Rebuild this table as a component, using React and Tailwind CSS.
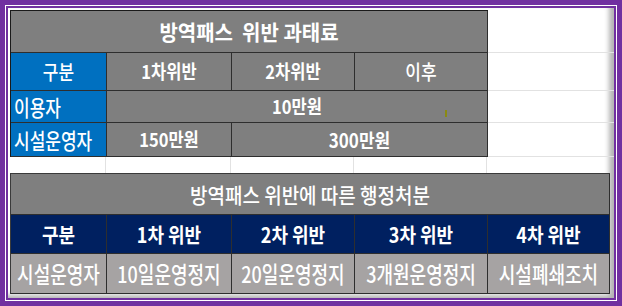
import React from "react";

const font = "font-['Noto_Sans_CJK_KR','Noto_Sans',sans-serif]";

function Cell({ className = "", children, left }) {
  return (
    <div
      className={`flex items-center border-r border-b border-[#2e2e2e] text-white ${
        left ? "justify-start pl-[3px]" : "justify-center"
      } ${className}`}
    >
      {children}
    </div>
  );
}

export default function App() {
  return (
    <div className={`w-[622px] h-[306px] bg-[#7030a0] p-[5px] ${font}`}>
      <div className="h-full border border-white bg-[#7030a0] p-[2px]">
        <div className="h-full bg-white pl-[2px] pt-[2px] shadow-[inset_-5px_-3px_5px_rgba(0,0,0,0.3)]">
          {/* 과태료 표 */}
          <div className="flex">
            <div className="grid grid-cols-[96px_125px_123px_133px] grid-rows-[42px_38px_32px_34px] border-l border-t border-[#1a1a1a]">
              <Cell className="col-span-4 bg-[#7f7f7f] text-[20px] font-bold">
                <span className="inline-block scale-y-[1.05]">방역패스&nbsp; 위반 과태료</span>
              </Cell>
              <Cell className="bg-[#0070c0] text-[17px] font-medium">
                <span className="inline-block scale-y-[1.2]">구분</span>
              </Cell>
              <Cell className="bg-[#7f7f7f] text-[16.5px] font-bold">
                <span className="inline-block scale-y-[1.15]">1차위반</span>
              </Cell>
              <Cell className="bg-[#7f7f7f] text-[16.5px] font-bold">
                <span className="inline-block scale-y-[1.15]">2차위반</span>
              </Cell>
              <Cell className="bg-[#7f7f7f] text-[17px] font-medium">
                <span className="inline-block scale-y-[1.2]">이후</span>
              </Cell>
              <Cell left className="bg-[#0070c0] text-[17px] font-medium">
                <span className="inline-block scale-y-[1.25]">이용자</span>
              </Cell>
              <Cell className="relative col-span-3 bg-[#7f7f7f] text-[16.5px] font-bold">
                <span className="inline-block scale-y-[1.15]">10만원</span>
                <span className="absolute left-[338px] top-[19px] h-[7px] w-[2px] bg-[#8a8a12]"></span>
              </Cell>
              <Cell left className="bg-[#0070c0] text-[17px] font-medium">
                <span className="inline-block scale-y-[1.25]">시설운영자</span>
              </Cell>
              <Cell className="bg-[#7f7f7f] text-[16.5px] font-bold">
                <span className="inline-block scale-y-[1.15]">150만원</span>
              </Cell>
              <Cell className="col-span-2 bg-[#7f7f7f] text-[17px] font-bold">
                <span className="inline-block scale-y-[1.15]">300만원</span>
              </Cell>
            </div>
            <div className="flex flex-1 flex-col pt-px">
              <div className="h-[42px] border-b border-[#e2e2e2]"></div>
              <div className="h-[38px] border-b border-[#e2e2e2]"></div>
              <div className="h-[32px] border-b border-[#e2e2e2]"></div>
              <div className="h-[34px] border-b border-[#e2e2e2]"></div>
            </div>
          </div>

          {/* 격자선 */}
          <div className="grid h-[16px] w-[596px] grid-cols-[96px_125px_123px_133px_119px]">
            <div className="border-r border-[#e2e2e2]"></div>
            <div className="border-r border-[#e2e2e2]"></div>
            <div className="border-r border-[#e2e2e2]"></div>
            <div className="border-r border-[#e2e2e2]"></div>
            <div></div>
          </div>

          {/* 행정처분 표 */}
          <div className="grid w-fit grid-cols-[96px_125px_123px_133px_122px] grid-rows-[41px_39px_40px] border-l border-t border-[#3a3a3a]">
            <Cell className="col-span-5 bg-[#7f7f7f] text-[19px] font-medium">
              <span className="inline-block scale-y-[1.1]">방역패스 위반에 따른 행정처분</span>
            </Cell>
            {["구분", "1차 위반", "2차 위반", "3차 위반", "4차 위반"].map((t) => (
              <Cell key={t} className="bg-[#002060] text-[18px] font-bold">
                <span className="inline-block scale-y-[1.15]">{t}</span>
              </Cell>
            ))}
            {["시설운영자", "10일운영정지", "20일운영정지", "3개원운영정지", "시설폐쇄조치"].map((t) => (
              <Cell key={t} className="bg-[#a6a3a3] text-[18px] font-medium">
                <span className="inline-block scale-y-[1.25]">{t}</span>
              </Cell>
            ))}
          </div>
        </div>
      </div>
    </div>
  );
}
